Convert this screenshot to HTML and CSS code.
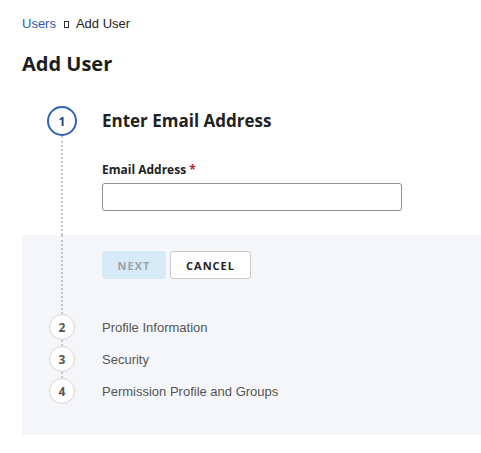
FILE: index.html
```html
<!DOCTYPE html>
<html>
<head>
<meta charset="utf-8">
<link rel="stylesheet" href="styles.css">
</head>
<body>
<nav class="crumbs"><a class="crumb-link">Users</a><span class="sep"></span><span class="crumb-current">Add User</span></nav>
<h1 class="page-title">Add User</h1>
<div class="wizard">
  <div class="row head">
    <div class="rail"><div class="circle active">1</div></div>
    <h2 class="step-title">Enter Email Address</h2>
  </div>
  <div class="row">
    <div class="rail"><div class="line"></div></div>
    <div class="form">
      <label class="label">Email Address <span class="req">*</span></label>
      <input class="input" type="text">
    </div>
  </div>
  <div class="panel">
    <div class="row">
      <div class="rail"><div class="line"></div></div>
      <div class="actions">
        <button class="btn btn-next">NEXT</button>
        <button class="btn btn-cancel">CANCEL</button>
      </div>
    </div>
    <div class="row step">
      <div class="rail"><div class="circle">2</div><div class="line short"></div></div>
      <div class="step-name">Profile Information</div>
    </div>
    <div class="row step">
      <div class="rail"><div class="circle">3</div><div class="line short"></div></div>
      <div class="step-name">Security</div>
    </div>
    <div class="row step">
      <div class="rail"><div class="circle">4</div></div>
      <div class="step-name">Permission Profile and Groups</div>
    </div>
  </div>
</div>
</body>
</html>
```
FILE: styles.css
```css
* { box-sizing: border-box; }
html, body { margin: 0; padding: 0; background: #fff; }
body {
  padding-left: 22px;
  font-family: "Open Sans", "Liberation Sans", sans-serif;
  color: #222;
}
.crumbs {
  margin-top: 16px;
  font-family: "Liberation Sans", Arial, sans-serif;
  font-size: 13px;
  line-height: 16px;
  display: flex;
  align-items: center;
}
.crumb-link { color: #2d5ca8; }
.sep {
  display: inline-block;
  width: 5px;
  height: 7px;
  border: 1px solid #333;
  margin: 0 7px 0 8px;
}
.crumb-current { color: #222; }
.page-title {
  margin: 18px 0 0;
  font-size: 20px;
  line-height: 28px;
  font-weight: 700;
  color: #1d1d1d;
}
.wizard { margin-top: 28px; }
.row { display: flex; }
.rail {
  width: 80px;
  flex: none;
  display: flex;
  flex-direction: column;
  align-items: center;
}
.line {
  flex: 1;
  width: 0;
  border-left: 2px dotted #c6c6c6;
}
.line.short { flex: none; height: 6px; }
.circle {
  width: 26px;
  height: 26px;
  border-radius: 50%;
  border: 1.5px solid #d6d6d6;
  background: #fff;
  display: flex;
  align-items: center;
  justify-content: center;
  font-size: 12px;
  font-weight: 700;
  color: #555;
  flex: none;
}
.circle.active {
  width: 30px;
  height: 30px;
  border: 2px solid #2f63b8;
  color: #24457d;
}
.head { align-items: center; height: 30px; }
.step-title {
  margin: 0;
  font-size: 17px;
  line-height: 24px;
  font-weight: 700;
  color: #222;
}
.form {
  padding: 26px 0 24px;
  display: flex;
  flex-direction: column;
}
.label {
  font-size: 12px;
  line-height: 16px;
  font-weight: 700;
  color: #222;
}
.req { color: #c0202a; }
.input {
  margin-top: 5px;
  width: 300px;
  height: 28px;
  border: 1px solid #8f8f8f;
  border-radius: 3px;
  background: #fff;
}
.panel {
  background: #f4f6fa;
  padding-bottom: 31px;
}
.actions {
  padding: 16px 0 35px;
  display: flex;
  gap: 4px;
}
.btn {
  height: 28px;
  border-radius: 3px;
  font-family: "Open Sans", "Liberation Sans", sans-serif;
  font-size: 11px;
  font-weight: 700;
  letter-spacing: 1px;
  padding: 0;
}
.btn-next {
  width: 64px;
  background: #d6eaf7;
  border: 1px solid #d6eaf7;
  color: #9ca3a9;
}
.btn-cancel {
  width: 81px;
  background: #fff;
  border: 1px solid #c9c9c9;
  color: #222;
}
.step { align-items: flex-start; }
.step-name {
  height: 26px;
  display: flex;
  align-items: center;
  font-family: "Liberation Sans", Arial, sans-serif;
  font-size: 13px;
  color: #555;
}
```
